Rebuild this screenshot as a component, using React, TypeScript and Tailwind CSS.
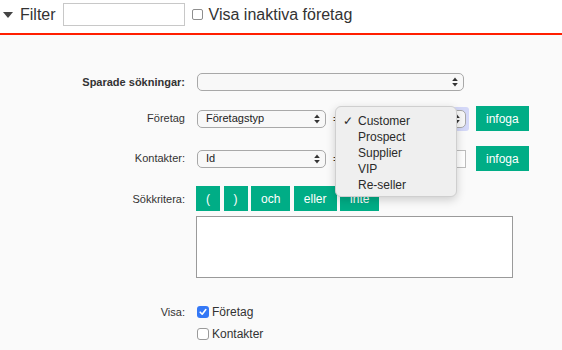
import React from 'react';

const font = { fontFamily: '"Liberation Sans", Arial, sans-serif' };

const Arrows = () => (
  <svg width="6" height="10" viewBox="0 0 6 10">
    <path d="M3 0.5 L5.8 4 H0.2 Z" fill="#333" />
    <path d="M3 9.5 L5.8 6 H0.2 Z" fill="#333" />
  </svg>
);

const FakeSelect = ({ className, value }: { className: string; value?: string }) => (
  <div
    className={`flex h-[18px] items-center justify-between rounded-[5px] border border-[#a8a8a8] bg-[#f8f8f8] pl-[8px] pr-[5px] text-[11px] text-[#222] ${className}`}
  >
    <span>{value ?? ''}</span>
    <Arrows />
  </div>
);

const GreenButton = ({ children }: { children: React.ReactNode }) => (
  <button className="h-[25px] bg-[#00ad86] px-[10px] text-[12px] leading-none text-white">{children}</button>
);

const Label = ({ children, bold }: { children: React.ReactNode; bold?: boolean }) => (
  <div className={`w-[185px] shrink-0 text-right text-[11px] text-[#333] ${bold ? 'font-bold' : ''}`}>{children}</div>
);

const options = ['Customer', 'Prospect', 'Supplier', 'VIP', 'Re-seller'];

export default function App() {
  return (
    <div style={font} className="h-[350px] w-[562px] overflow-hidden bg-[#fafafa] text-[#333]">
      {/* filter bar */}
      <div className="flex h-[35px] items-center border-b-2 border-[#ff1e00] bg-white pb-[4px]">
        <svg width="10" height="6" viewBox="0 0 10 6" className="ml-[3px]">
          <path d="M0 0 H10 L5 6 Z" fill="#444" />
        </svg>
        <span className="ml-[7px] text-[16px]">Filter</span>
        <div className="ml-[7px] h-[23px] w-[122px] border border-[#c8c8c8] bg-white" />
        <div className="ml-[7px] h-[11px] w-[11px] rounded-[2px] border border-[#8e8e8e] bg-white" />
        <span className="ml-[6px] text-[16px]">Visa inaktiva företag</span>
      </div>

      <div className="relative flex flex-col pt-[38px]">
        {/* saved searches */}
        <div className="flex h-[18px] items-center">
          <Label bold>Sparade sökningar:</Label>
          <FakeSelect className="ml-[12px] w-[267px]" />
        </div>

        {/* company */}
        <div className="mt-[15px] flex h-[25px] items-center">
          <Label>Företag</Label>
          <FakeSelect className="ml-[12px] w-[129px]" value="Företagstyp" />
          <span className="ml-[7px] text-[12px]">=</span>
          <div className="ml-[2px] rounded-[3px] bg-[#d4d8f8] p-[3px]">
            <FakeSelect className="w-[121px]" />
          </div>
          <div className="ml-[7px]">
            <GreenButton>infoga</GreenButton>
          </div>
        </div>

        {/* contacts */}
        <div className="mt-[15px] flex h-[25px] items-center">
          <Label>Kontakter:</Label>
          <FakeSelect className="ml-[12px] w-[129px]" value="Id" />
          <span className="ml-[7px] text-[12px]">=</span>
          <div className="ml-[3px] h-[18px] w-[123px] border border-[#bdbdbd] bg-white" />
          <div className="ml-[10px]">
            <GreenButton>infoga</GreenButton>
          </div>
        </div>

        {/* criteria */}
        <div className="mt-[15px] flex items-start">
          <div className="pt-[5px]">
            <Label>Sökkritera:</Label>
          </div>
          <div className="ml-[11px] flex flex-col">
            <div className="flex gap-[3.5px]">
              <GreenButton>(</GreenButton>
              <GreenButton>)</GreenButton>
              <GreenButton>och</GreenButton>
              <GreenButton>eller</GreenButton>
              <GreenButton>inte</GreenButton>
            </div>
            <div className="mt-[5px] h-[62px] w-[317px] border border-[#9a9a9a] bg-white" />
          </div>
        </div>

        {/* show */}
        <div className="mt-[25px] flex items-center">
          <Label>Visa:</Label>
          <div className="ml-[12px] flex h-[12px] w-[12px] items-center justify-center rounded-[3px] bg-[#3478f6]">
            <svg width="8" height="8" viewBox="0 0 8 8">
              <path d="M1.2 4.2 L3.2 6.2 L6.8 1.6" stroke="white" strokeWidth="1.6" fill="none" strokeLinecap="round" strokeLinejoin="round" />
            </svg>
          </div>
          <span className="ml-[3px] text-[12px]">Företag</span>
        </div>
        <div className="mt-[4px] flex items-center">
          <div className="w-[185px] shrink-0" />
          <div className="ml-[12px] h-[12px] w-[12px] rounded-[3px] border border-[#9a9a9a] bg-white" />
          <span className="ml-[3px] text-[12px]">Kontakter</span>
        </div>

        {/* open dropdown menu */}
        <div className="absolute left-[335px] top-[71px] w-[122px] rounded-[6px] border border-[#cfcfcf] bg-[#efefef] pb-[3px] pt-[6px] text-[12px] text-[#2a2a2a] shadow-[0_3px_10px_rgba(0,0,0,0.18)]">
          {options.map((o, i) => (
            <div key={o} className="flex h-[16px] items-center">
              <span className="w-[22px] pl-[7px] text-[12px]">{i === 0 ? '✓' : ''}</span>
              <span>{o}</span>
            </div>
          ))}
        </div>
      </div>
    </div>
  );
}
